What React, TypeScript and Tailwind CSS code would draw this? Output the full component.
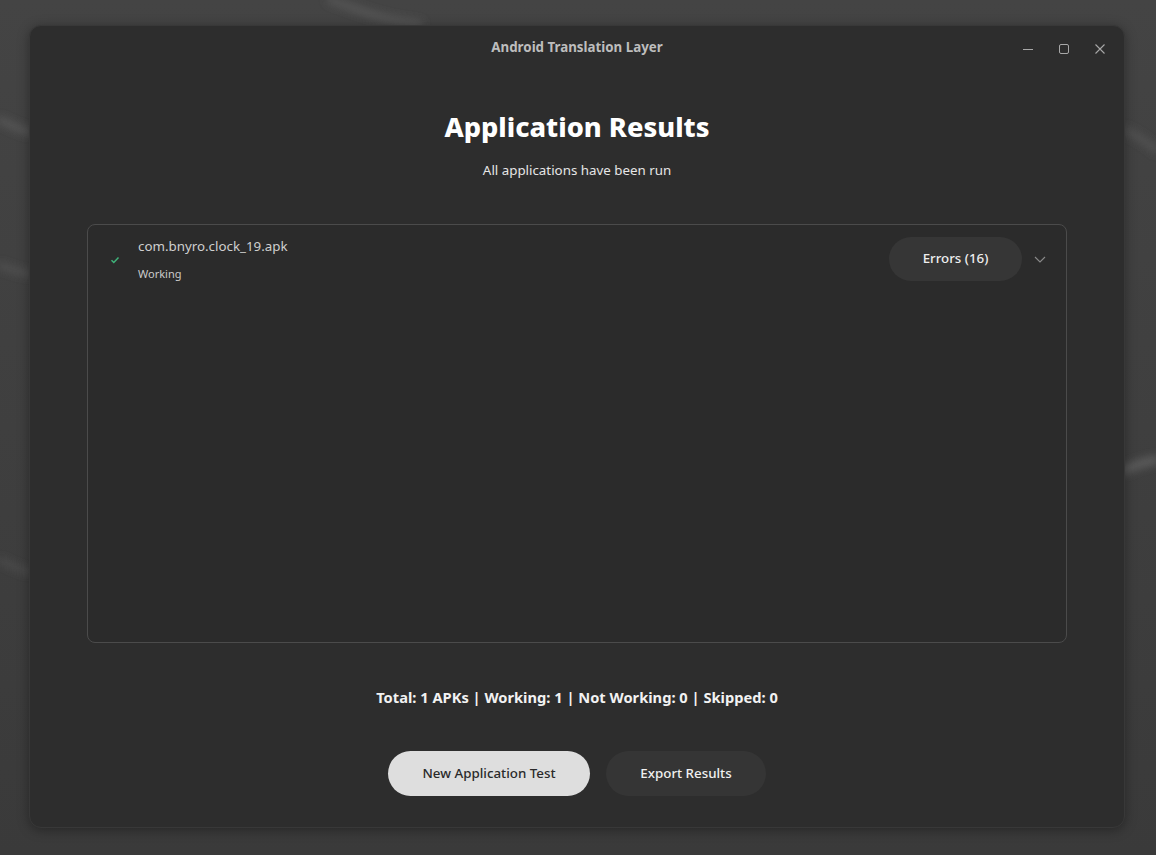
import React from "react";

function Wallpaper() {
  return (
    <svg className="absolute inset-0 w-full h-full" viewBox="0 0 1156 855" preserveAspectRatio="none">
      <defs>
        <linearGradient id="bg" x1="0" y1="0" x2="0" y2="1">
          <stop offset="0" stopColor="#444444" />
          <stop offset="1" stopColor="#3a3a3a" />
        </linearGradient>
        <filter id="blur"><feGaussianBlur stdDeviation="4" /></filter>
      </defs>
      <rect width="1156" height="855" fill="url(#bg)" />
      <g filter="url(#blur)" fill="none" strokeLinecap="round">
        <path d="M330 0 C 360 10, 380 20, 420 24" stroke="#5a5a5a" strokeWidth="6" />
        <path d="M0 120 C 10 125, 20 130, 30 132" stroke="#5a5a5a" strokeWidth="6" />
        <path d="M0 265 C 10 270, 20 272, 30 274" stroke="#555" strokeWidth="5" />
        <path d="M1125 130 C 1135 135, 1145 140, 1156 150" stroke="#555" strokeWidth="6" />
        <path d="M1125 470 C 1135 465, 1145 462, 1156 460" stroke="#5f5f5f" strokeWidth="8" />
        <path d="M0 560 C 10 565, 20 570, 30 572" stroke="#4f4f4f" strokeWidth="5" />
      </g>
    </svg>
  );
}

export default function App() {
  const font = { fontFamily: '"Noto Sans", "Open Sans", sans-serif' };
  return (
    <div className="relative w-[1156px] h-[855px] overflow-hidden" style={font}>
      <Wallpaper />
      <div className="relative pt-[25px] pl-[29px]">
        <div className="w-[1096px] h-[803px] rounded-[12px] bg-[#2d2d2d] shadow-[0_2px_12px_rgba(0,0,0,0.35)] border border-[#383838] flex flex-col">
          {/* title bar */}
          <div className="relative h-[44px] pb-[2px] flex items-center justify-center">
            <span className="text-[13.33px] leading-[20px] font-bold text-[#bdbdbd]">Android Translation Layer</span>
            <div className="absolute right-[16px] top-[15px] flex items-center gap-[20px] text-[#a8a8a8]">
              <svg width="16" height="16" viewBox="0 0 16 16"><path d="M3 8.5h10" stroke="currentColor" strokeWidth="1" /></svg>
              <svg width="16" height="16" viewBox="0 0 16 16"><rect x="3.5" y="3.5" width="9" height="9" rx="1.5" fill="none" stroke="currentColor" strokeWidth="1" /></svg>
              <svg width="16" height="16" viewBox="0 0 16 16"><path d="M3.5 3.5l9 9M12.5 3.5l-9 9" stroke="currentColor" strokeWidth="1.1" /></svg>
            </div>
          </div>
          {/* content */}
          <div className="flex flex-col items-center px-[57px]">
            <h1 className="mt-[38px] text-[27.2px] leading-[38px] font-extrabold text-white">Application Results</h1>
            <p className="mt-[14px] text-[13.33px] leading-[20px] text-[#e6e6e6]">All applications have been run</p>
            <div className="mt-[44px] w-full h-[419px] rounded-[8px] border border-[#4b4b4b] bg-[#2b2b2b]">
              <div className="flex items-center h-[68px] pl-[22px] pr-[18px]">
                <svg width="10" height="10" viewBox="0 0 10 10" className="mr-[18px] mt-[1px]">
                  <path d="M1.5 5.2l2.3 2.3 4.7-5" fill="none" stroke="#3fb37a" strokeWidth="1.5" />
                </svg>
                <div className="flex flex-col flex-1">
                  <span className="text-[13.33px] leading-[20px] text-[#cfcfcf]">com.bnyro.clock_19.apk</span>
                  <span className="mt-[10px] text-[11px] leading-[16px] text-[#cccccc]">Working</span>
                </div>
                <button className="w-[133px] h-[44px] rounded-full bg-[#363636] text-[13.33px] font-medium text-[#eeeeee]">Errors (16)</button>
                <svg width="16" height="16" viewBox="0 0 16 16" className="ml-[10px]">
                  <path d="M3 6l5 5 5-5" fill="none" stroke="#8a8a8a" strokeWidth="1.1" />
                </svg>
              </div>
            </div>
            <p className="mt-[43px] text-[14.67px] leading-[22px] font-bold text-[#f2f2f2]">Total: 1 APKs | Working: 1 | Not Working: 0 | Skipped: 0</p>
            <div className="mt-[43px] flex gap-[16px]">
              <button className="w-[202px] h-[45px] rounded-full bg-[#dedede] text-[13.33px] font-medium text-[#2a2a2a]">New Application Test</button>
              <button className="w-[160px] h-[45px] rounded-full bg-[#353535] text-[13.33px] font-medium text-[#f0f0f0]">Export Results</button>
            </div>
          </div>
        </div>
      </div>
    </div>
  );
}
